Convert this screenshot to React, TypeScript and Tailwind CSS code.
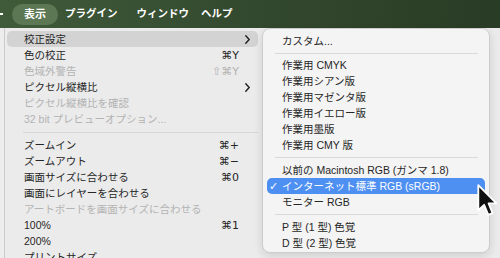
import { ReactNode } from "react"

type Row = {
  label: string
  shortcut?: string
  arrow?: boolean
  disabled?: boolean
  active?: boolean
} | "sep"

const mainRows: Row[] = [
  { label: "校正設定", arrow: true, active: true },
  { label: "色の校正", shortcut: "⌘Y" },
  { label: "色域外警告", shortcut: "⇧⌘Y", disabled: true },
  { label: "ピクセル縦横比", arrow: true },
  { label: "ピクセル縦横比を確認", disabled: true },
  { label: "32 bit プレビューオプション...", disabled: true },
  "sep",
  { label: "ズームイン", shortcut: "⌘+" },
  { label: "ズームアウト", shortcut: "⌘−" },
  { label: "画面サイズに合わせる", shortcut: "⌘0" },
  { label: "画面にレイヤーを合わせる" },
  { label: "アートボードを画面サイズに合わせる", disabled: true },
  { label: "100%", shortcut: "⌘1" },
  { label: "200%" },
  { label: "プリントサイズ" },
]

type SubRow = { label: string; checked?: boolean } | "sep8" | "sep9"

const subRows: SubRow[] = [
  { label: "カスタム..." },
  "sep8",
  { label: "作業用 CMYK" },
  { label: "作業用シアン版" },
  { label: "作業用マゼンタ版" },
  { label: "作業用イエロー版" },
  { label: "作業用墨版" },
  { label: "作業用 CMY 版" },
  "sep9",
  { label: "以前の Macintosh RGB (ガンマ 1.8)" },
  { label: "インターネット標準 RGB (sRGB)", checked: true },
  { label: "モニター RGB" },
  "sep9",
  { label: "P 型 (1 型) 色覚" },
  { label: "D 型 (2 型) 色覚" },
]

function Chevron() {
  return (
    <svg width="5" height="9" viewBox="0 0 5 9" fill="none">
      <path d="M0.8 0.8 L4.2 4.5 L0.8 8.2" stroke="#1f1f1f" strokeWidth="1.4" strokeLinecap="round" strokeLinejoin="round" />
    </svg>
  )
}

function TopItem({ children, className }: { children: ReactNode; className: string }) {
  return <div className={`whitespace-nowrap text-[10.5px] font-semibold text-white ${className}`}>{children}</div>
}

export default function App() {
  return (
    <div
      className="relative h-[258px] w-[500px] overflow-hidden bg-[#ededed]"
      style={{ fontFamily: '"Liberation Sans", "Noto Sans CJK JP", sans-serif' }}
    >
      <div className="flex h-[28px] items-center bg-linear-to-r from-[#3f5b39] via-[#33492f] to-[#293c25]">
        <div className="h-[1.5px] w-[3px] bg-white" />
        <div className="ml-[9px] flex h-[21px] w-[46px] items-center justify-center rounded-full bg-[#5c7754]">
          <TopItem className="text-[11px]">表示</TopItem>
        </div>
        <TopItem className="ml-[7px]">プラグイン</TopItem>
        <TopItem className="ml-[19px]">ウィンドウ</TopItem>
        <TopItem className="ml-[12px]">ヘルプ</TopItem>
      </div>

      <div className="ml-[4px] h-[240px] border-l border-[#cbcbcb] bg-[#ebebeb] pt-[3px]">
        {mainRows.map((row, i) =>
          row === "sep" ? (
            <div key={i} className="flex h-[10px] items-center pl-[18px]">
              <div className="h-px w-[235px] bg-[#d6d6d6]" />
            </div>
          ) : (
            <div
              key={i}
              className={`ml-[2px] flex h-[16px] w-[251px] items-center justify-between rounded-[5px] pl-[17px] pr-[6px] text-[10.5px] leading-none ${
                row.active ? "bg-[#d3d3d3]" : ""
              } ${row.disabled ? "text-[#b3b3b3]" : "text-[#262626]"}`}
            >
              <span className="whitespace-nowrap">{row.label}</span>
              <div className="flex items-center">
                {row.shortcut ? (
                  <span className="whitespace-nowrap font-['DejaVu_Sans'] text-[11px]">{row.shortcut}</span>
                ) : null}
                <div className="flex w-[13px] items-center pl-[6px]">{row.arrow ? <Chevron /> : null}</div>
              </div>
            </div>
          )
        )}
      </div>

      <div className="absolute left-[262px] top-[28px] w-[228px] rounded-[8px] border border-[#cdcdcd] bg-[#f4f4f4] pb-[1px] pt-[4px] shadow-[0_3px_10px_rgba(0,0,0,0.12)]">
        {subRows.map((row, i) =>
          row === "sep8" || row === "sep9" ? (
            <div key={i} className={`flex items-center pl-[12px] ${row === "sep8" ? "h-[8px]" : "h-[9px]"}`}>
              <div className="h-px w-[203px] bg-[#dadada]" />
            </div>
          ) : (
            <div
              key={i}
              className={`relative mx-[4px] flex h-[16px] items-center rounded-[5px] pl-[15px] text-[10.5px] leading-none ${
                row.checked ? "bg-[#4e8ff2] text-white" : "text-[#262626]"
              }`}
            >
              {row.checked ? (
                <span className="absolute left-[2px] font-['DejaVu_Sans'] text-[11px] font-bold">✓</span>
              ) : null}
              <span className="whitespace-nowrap">{row.label}</span>
            </div>
          )
        )}
      </div>

      <svg className="absolute left-[476px] top-[183px]" width="23" height="36" viewBox="0 0 15 23">
        <path
          d="M1.5 1.2 L1.5 17.5 L5.3 14 L8 20.6 L10.8 19.4 L8.2 13 L13.3 13 Z"
          fill="#111"
          stroke="#fff"
          strokeWidth="1.2"
          strokeLinejoin="round"
        />
      </svg>
    </div>
  )
}
